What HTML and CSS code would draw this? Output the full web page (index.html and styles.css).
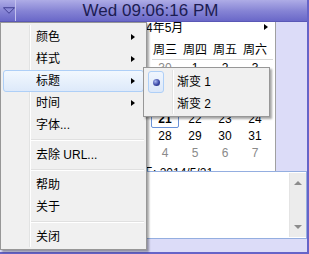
FILE: index.html
```html
<!DOCTYPE html>
<html>
<head>
<meta charset="utf-8">
<link rel="stylesheet" href="styles.css">
</head>
<body>
<div class="window">
  <div class="titlebar">
    <div class="dropbtn">
      <svg width="13" height="7" viewBox="0 0 13 7"><polygon points="0.5,0.5 12.5,0.5 6.5,6.5" fill="#8c8ad8" stroke="#3a388c" stroke-width="1"/></svg>
    </div>
    <div class="clock">Wed 09:06:16 PM</div>
  </div>
  <div class="body">
    <div class="calwrap">
      <div class="calendar">
        <div class="cal-head">
          <span class="month">2014年5月</span>
          <span class="next"></span>
        </div>
        <div class="cal-grid weekdays">
          <span>周日</span><span>周一</span><span>周二</span><span>周三</span><span>周四</span><span>周五</span><span>周六</span>
        </div>
        <div class="cal-rule"></div>
        <div class="cal-grid days">
          <span class="dim">27</span><span class="dim">28</span><span class="dim">29</span><span class="dim">30</span><span>1</span><span>2</span><span>3</span>
          <span>4</span><span>5</span><span>6</span><span>7</span><span>8</span><span>9</span><span>10</span>
          <span>11</span><span>12</span><span>13</span><span>14</span><span>15</span><span>16</span><span>17</span>
          <span>18</span><span>19</span><span>20</span><span class="today">21</span><span>22</span><span>23</span><span>24</span>
          <span>25</span><span>26</span><span>27</span><span>28</span><span>29</span><span>30</span><span>31</span>
          <span class="dim">1</span><span class="dim">2</span><span class="dim">3</span><span class="dim">4</span><span class="dim">5</span><span class="dim">6</span><span class="dim">7</span>
        </div>
        <div class="today-line">今天: 2014/5/21</div>
      </div>
    </div>
    <div class="notes">
      <div class="notes-text"></div>
      <div class="scrollbar">
        <span class="sb-up"></span>
        <span class="sb-down"></span>
      </div>
    </div>
  </div>

  <div class="menu main-menu">
    <div class="gutter"></div>
    <div class="item"><span class="label">颜色</span><span class="arrow"></span></div>
    <div class="item"><span class="label">样式</span><span class="arrow"></span></div>
    <div class="item hover"><span class="label">标题</span><span class="arrow"></span></div>
    <div class="item"><span class="label">时间</span><span class="arrow"></span></div>
    <div class="item"><span class="label">字体...</span></div>
    <div class="sep"></div>
    <div class="item"><span class="label">去除 URL...</span></div>
    <div class="sep"></div>
    <div class="item"><span class="label">帮助</span></div>
    <div class="item"><span class="label">关于</span></div>
    <div class="sep"></div>
    <div class="item"><span class="label">关闭</span></div>
  </div>

  <div class="menu sub-menu">
    <div class="gutter"></div>
    <div class="item"><span class="check"><span class="dot"></span></span><span class="label">渐变 1</span></div>
    <div class="item"><span class="check empty"></span><span class="label">渐变 2</span></div>
  </div>
</div>
</body>
</html>
```
FILE: styles.css
```css
html, body {
  margin: 0;
  padding: 0;
  width: 309px;
  height: 254px;
  overflow: hidden;
  background: #ffffff;
}

.window {
  position: relative;
  width: 307px;
  height: 252px;
  border-right: 2px solid #6664c8;
  border-bottom: 2px solid #6664c8;
  background: #dcdcf8;
  display: flex;
  flex-direction: column;
  font-family: "Liberation Sans", "Noto Sans CJK SC", sans-serif;
  font-size: 12px;
  color: #000;
}

.titlebar {
  height: 22px;
  flex: none;
  display: flex;
  background: linear-gradient(#aeace6, #8482d4 55%, #6a68c8);
  border-bottom: 1px solid #5a58b6;
  box-sizing: border-box;
}

.dropbtn {
  width: 16px;
  flex: none;
  border-right: 1px solid #c4c2ee;
  display: flex;
  align-items: center;
  justify-content: flex-start;
  padding-left: 3px;
  box-sizing: border-box;
}

.clock {
  flex: 1;
  text-align: center;
  font-family: "Liberation Sans", sans-serif;
  font-size: 17px;
  line-height: 22px;
  color: #1c1c52;
  padding-right: 22px;
}

.body {
  flex: 1;
  display: flex;
  flex-direction: column;
}

.calwrap {
  height: 149px;
  flex: none;
  display: flex;
}

.calendar {
  width: 276px;
  box-sizing: border-box;
  border-right: 1px solid #a0a0a0;
  background: #ffffff;
  overflow: hidden;
  padding-left: 60px;
}

.cal-head {
  height: 18px;
  position: relative;
  line-height: 12px;
}

.month {
  display: inline-block;
  margin-left: 66px;
  padding-top: 0;
  font-size: 12px;
}

.next {
  position: absolute;
  left: 204px;
  top: 2px;
  width: 0;
  height: 0;
  border-top: 3px solid transparent;
  border-bottom: 3px solid transparent;
  border-left: 4px solid #000;
}

.cal-grid {
  display: grid;
  grid-template-columns: repeat(7, 30px);
  text-align: center;
}

.weekdays {
  height: 19px;
  line-height: 19px;
  padding-top: 1px;
  box-sizing: border-box;
}

.cal-rule {
  height: 1px;
  margin: 0 2px 0 92px;
  background: #d8d8d8;
}

.days {
  grid-auto-rows: 17px;
  line-height: 17px;
}

.days .dim {
  color: #8a8a8a;
}

.days .today {
  font-weight: bold;
  border: 1px solid #6a92d8;
  border-radius: 2px;
  line-height: 15px;
  margin: 0 1px;
}

.today-line {
  padding-left: 69px;
  line-height: 17px;
  padding-top: 3px;
}

.notes {
  height: 68px;
  flex: none;
  display: flex;
  border: 1px solid #94aee0;
  border-left: none;
  background: #fff;
  box-sizing: border-box;
}

.notes-text {
  flex: 1;
}

.scrollbar {
  width: 17px;
  flex: none;
  background: #ececec;
  border-left: 1px solid #e4e4e4;
  position: relative;
  box-sizing: border-box;
  margin: 1px 0;
}

.sb-up, .sb-down {
  position: absolute;
  left: 4px;
  width: 0;
  height: 0;
  border-left: 4px solid transparent;
  border-right: 4px solid transparent;
}

.sb-up {
  top: 8px;
  border-bottom: 4px solid #8c8c8c;
}

.sb-down {
  bottom: 8px;
  border-top: 4px solid #8c8c8c;
}

.menu {
  position: absolute;
  background: #f0f0f0;
  border: 1px solid #979797;
  box-sizing: border-box;
  padding: 3px 2px;
  box-shadow: 2px 2px 2px rgba(0, 0, 0, 0.35);
  font-family: "Liberation Sans", "Noto Sans CJK SC", sans-serif;
  font-size: 12px;
}

.main-menu {
  left: 0;
  top: 22px;
  width: 147px;
  height: 228px;
}

.sub-menu {
  left: 143px;
  top: 67px;
  width: 127px;
  height: 50px;
}

.gutter {
  position: absolute;
  top: 2px;
  bottom: 2px;
  width: 1px;
  background: #e2e3e3;
  border-right: 1px solid #ffffff;
}

.main-menu .gutter {
  left: 28px;
}

.sub-menu .gutter {
  left: 28px;
}

.item {
  position: relative;
  height: 22px;
  display: flex;
  align-items: center;
  box-sizing: border-box;
  border: 1px solid transparent;
  border-radius: 3px;
}

.item .label {
  padding-left: 32px;
  flex: 1;
  line-height: 20px;
}

.item.hover {
  border-color: #aecff7;
  background: linear-gradient(#f2f8fe, #dde9fa);
}

.arrow {
  width: 0;
  height: 0;
  border-top: 3.5px solid transparent;
  border-bottom: 3.5px solid transparent;
  border-left: 4px solid #000;
  margin-right: 8px;
}

.sep {
  height: 8px;
  margin-left: 28px;
  position: relative;
}

.sep::before {
  content: "";
  position: absolute;
  left: 0;
  right: 0;
  top: 3px;
  height: 1px;
  background: #e0e0e0;
  border-bottom: 1px solid #ffffff;
}

.check {
  width: 16px;
  height: 22px;
  margin-left: 1px;
  margin-top: -1px;
  margin-bottom: -1px;
  box-sizing: border-box;
  border: 1px solid #aecff7;
  border-radius: 3px;
  background: linear-gradient(#f0f6fe, #dce8f9);
  display: flex;
  align-items: center;
  justify-content: center;
}

.check.empty {
  border-color: transparent;
  background: none;
}

.sub-menu .item .label {
  padding-left: 13px;
}

.dot {
  width: 7px;
  height: 7px;
  border-radius: 50%;
  background: radial-gradient(circle at 35% 35%, #a9b8f0, #3c4aa8 55%, #1a2268);
}
```
